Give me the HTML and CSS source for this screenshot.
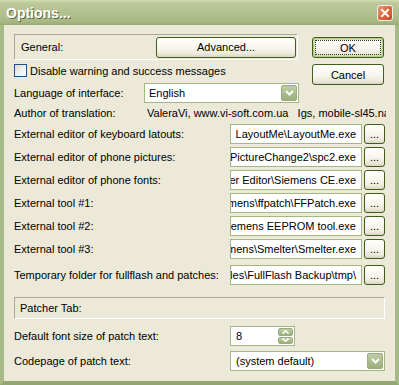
FILE: index.html
```html
<!DOCTYPE html>
<html lang="en">
<head>
    <meta charset="UTF-8">
    <title>Options...</title>
    <link rel="stylesheet" href="styles.css">
</head>
<body>
    <div class="window">
        <div class="titlebar">
            <span class="title">Options...</span>
            <span class="close">
                <svg width="14" height="14" viewBox="0 0 14 14">
                    <path d="M4 4 L10 10 M10 4 L4 10" stroke="#fff" stroke-width="2" stroke-linecap="square" fill="none"/>
                </svg>
            </span>
        </div>

        <div class="client">
            <div class="top">
                <div class="top-main">
                    <div class="panel general">
                        <span>General:</span>
                        <button class="btn advanced">Advanced...</button>
                    </div>
                    <div class="check-row">
                        <span class="checkbox"></span>
                        <span>Disable warning and success messages</span>
                    </div>
                    <div class="row lang-row">
                        <span class="label">Language of interface:</span>
                        <div class="combo lang">
                            <span class="combo-text">English</span>
                            <span class="drop">
                                <svg width="9" height="6" viewBox="0 0 9 6"><path d="M1 1 L4.5 4.5 L8 1" stroke="#fff" stroke-width="2" fill="none"/></svg>
                            </span>
                        </div>
                    </div>
                    <div class="row author-row">
                        <span class="label">Author of translation:</span>
                        <span class="author">ValeraVi, www.vi-soft.com.ua&nbsp;&nbsp; Igs, mobile-sl45.narod.ru</span>
                    </div>
                </div>
                <div class="top-side">
                    <button class="btn default">OK</button>
                    <button class="btn">Cancel</button>
                </div>
            </div>

            <div class="tools">
                <div class="tool-row">
                    <span class="tool-label">External editor of keyboard latouts:</span>
                    <div class="edit"><span>LayoutMe\LayoutMe.exe</span></div>
                    <button class="btn dots">...</button>
                </div>
                <div class="tool-row">
                    <span class="tool-label">External editor of phone pictures:</span>
                    <div class="edit"><span>C:\Siemens\PictureChange2\spc2.exe</span></div>
                    <button class="btn dots">...</button>
                </div>
                <div class="tool-row">
                    <span class="tool-label">External editor of phone fonts:</span>
                    <div class="edit"><span>C:\Siemens\Character Editor\Siemens CE.exe</span></div>
                    <button class="btn dots">...</button>
                </div>
                <div class="tool-row">
                    <span class="tool-label">External tool #1:</span>
                    <div class="edit"><span>C:\Siemens\ffpatch\FFPatch.exe</span></div>
                    <button class="btn dots">...</button>
                </div>
                <div class="tool-row">
                    <span class="tool-label">External tool #2:</span>
                    <div class="edit"><span>C:\Siemens\Siemens EEPROM tool.exe</span></div>
                    <button class="btn dots">...</button>
                </div>
                <div class="tool-row">
                    <span class="tool-label">External tool #3:</span>
                    <div class="edit"><span>C:\Siemens\Smelter\Smelter.exe</span></div>
                    <button class="btn dots">...</button>
                </div>
                <div class="tool-row temp">
                    <span class="tool-label">Temporary folder for fullflash and patches:</span>
                    <div class="edit"><span>C:\Program Files\FullFlash Backup\tmp\</span></div>
                    <button class="btn dots">...</button>
                </div>
            </div>

            <div class="panel patcher">Patcher Tab:</div>

            <div class="tool-row font-row">
                <span class="tool-label">Default font size of patch text:</span>
                <div class="spin">
                    <span class="spin-text">8</span>
                    <span class="spin-btns">
                        <span class="spin-btn">
                            <svg width="7" height="4" viewBox="0 0 7 4"><path d="M0.5 3.5 L3.5 0.8 L6.5 3.5" stroke="#fff" stroke-width="1.6" fill="none"/></svg>
                        </span>
                        <span class="spin-btn">
                            <svg width="7" height="4" viewBox="0 0 7 4"><path d="M0.5 0.5 L3.5 3.2 L6.5 0.5" stroke="#fff" stroke-width="1.6" fill="none"/></svg>
                        </span>
                    </span>
                </div>
            </div>
            <div class="tool-row codepage-row">
                <span class="tool-label">Codepage of patch text:</span>
                <div class="combo codepage">
                    <span class="combo-text">(system default)</span>
                    <span class="drop">
                        <svg width="9" height="6" viewBox="0 0 9 6"><path d="M1 1 L4.5 4.5 L8 1" stroke="#fff" stroke-width="2" fill="none"/></svg>
                    </span>
                </div>
            </div>
        </div>
    </div>
</body>
</html>
```

FILE: styles.css
```css
* {
    margin: 0;
    padding: 0;
    box-sizing: border-box;
}

body {
    background: #ece9d8;
    font-family: "Liberation Sans", Arial, sans-serif;
    font-size: 11px;
    color: #000;
}

.window {
    width: 399px;
    height: 385px;
    display: flex;
    flex-direction: column;
    background: #ece9d8;
}

/* title bar */
.titlebar {
    height: 25px;
    display: flex;
    align-items: center;
    padding: 0 6px 0 6px;
    background: linear-gradient(to bottom, #d3dcb4 0%, #bcc99a 12%, #b3c18e 50%, #a9b984 85%, #98aa73 100%);
}

.title {
    flex: 1;
    font-weight: bold;
    font-size: 14px;
    color: #fff;
    text-shadow: 1px 1px 0 #5d6b41;
    padding-top: 1px;
}

.close {
    width: 16px;
    height: 16px;
    display: flex;
    align-items: center;
    justify-content: center;
    border: 1px solid #f4efe6;
    border-radius: 3px;
    background: linear-gradient(135deg, #ec9a7c 0%, #de6a41 45%, #c84a22 100%);
}

/* client area */
.client {
    flex: 1;
    border-left: 4px solid #a7b987;
    border-right: 4px solid #a7b987;
    border-bottom: 4px solid #93a770;
    padding: 9px 10px 0 10px;
}

.top {
    display: flex;
    gap: 13px;
}

.top-main {
    width: 285px;
    flex-shrink: 0;
    display: flex;
    flex-direction: column;
}

.top-side {
    width: 72px;
    flex-shrink: 0;
    display: flex;
    flex-direction: column;
    gap: 6px;
    padding-top: 3px;
}

.panel {
    border-top: 1px solid #aca899;
    border-left: 1px solid #aca899;
    border-right: 1px solid #fff;
    border-bottom: 1px solid #fff;
    display: flex;
    align-items: center;
}

.general {
    width: 284px;
    height: 26px;
    padding-left: 6px;
}

.advanced {
    margin-left: auto;
    margin-right: 1px;
    width: 140px;
}

.btn {
    height: 21px;
    flex-shrink: 0;
    border: 1px solid #3f5d1d;
    border-radius: 3px;
    background: linear-gradient(to bottom, #fffffb 0%, #f7f5ec 55%, #ebe7d9 85%, #d9d3bf 100%);
    font-family: "Liberation Sans", Arial, sans-serif;
    font-size: 11px;
    color: #000;
}

.btn.default {
    box-shadow: inset 0 0 0 1px #b9ce8a, inset 0 0 0 2px #d3e0ae;
    outline: 1px dotted #333;
    outline-offset: -4px;
}

.check-row {
    margin-top: 4px;
    height: 13px;
    display: flex;
    align-items: center;
    gap: 3px;
    white-space: nowrap;
}

.checkbox {
    width: 13px;
    height: 13px;
    flex-shrink: 0;
    border: 1px solid #1c5180;
    background: linear-gradient(135deg, #dcdad0 0%, #f3f2ec 60%, #fff 100%);
}

.row {
    display: flex;
    align-items: center;
    white-space: nowrap;
}

.lang-row {
    margin-top: 6px;
    height: 20px;
}

.lang-row .label {
    width: 130px;
    flex-shrink: 0;
}

.author-row {
    margin-top: 1px;
    height: 17px;
}

.author-row .label {
    width: 133px;
    flex-shrink: 0;
}

.author {
    width: 239px;
    flex-shrink: 0;
    overflow: hidden;
}

/* combo boxes */
.combo {
    height: 20px;
    flex-shrink: 0;
    border: 1px solid #a4b97f;
    background: #fff;
    display: flex;
    align-items: center;
    padding: 1px;
}

.lang {
    width: 155px;
}

.combo-text {
    flex: 1;
    padding-left: 3px;
}

.drop {
    width: 16px;
    height: 16px;
    display: flex;
    align-items: center;
    justify-content: center;
    border: 1px solid #9bac7c;
    border-radius: 2px;
    background: linear-gradient(to bottom, #c1cda6 0%, #aebd8f 50%, #9dae7c 100%);
}

/* tool rows */
.tools {
    margin-top: 3px;
    display: flex;
    flex-direction: column;
    gap: 3px;
}

.tool-row {
    height: 20px;
    display: flex;
    align-items: center;
    white-space: nowrap;
}

.tool-row.temp {
    margin-top: 3px;
}

.tool-label {
    width: 216px;
    flex-shrink: 0;
}

.edit {
    width: 132px;
    height: 20px;
    flex-shrink: 0;
    border: 1px solid #a4b97f;
    background: #fff;
    display: flex;
    align-items: center;
    justify-content: flex-end;
    padding: 0 5px 0 2px;
    overflow: hidden;
}

.edit span {
    flex-shrink: 0;
}

.dots {
    width: 21px;
    height: 20px;
    margin-left: 2px;
    line-height: 12px;
}

.patcher {
    margin-top: 12px;
    height: 22px;
    padding-left: 5px;
}

.font-row {
    margin-top: 7px;
}

.spin {
    width: 65px;
    height: 20px;
    flex-shrink: 0;
    border: 1px solid #a4b97f;
    background: #fff;
    display: flex;
    align-items: center;
    padding: 1px;
}

.spin-text {
    flex: 1;
    padding-left: 4px;
}

.spin-btns {
    width: 15px;
    height: 16px;
    display: flex;
    flex-direction: column;
    gap: 1px;
}

.spin-btn {
    flex: 1;
    display: flex;
    align-items: center;
    justify-content: center;
    border: 1px solid #9bac7c;
    border-radius: 2px;
    background: linear-gradient(to bottom, #c1cda6 0%, #aebd8f 50%, #9dae7c 100%);
}

.codepage-row {
    margin-top: 5px;
}

.codepage {
    width: 155px;
}

.codepage .combo-text {
    padding-left: 4px;
}
```
